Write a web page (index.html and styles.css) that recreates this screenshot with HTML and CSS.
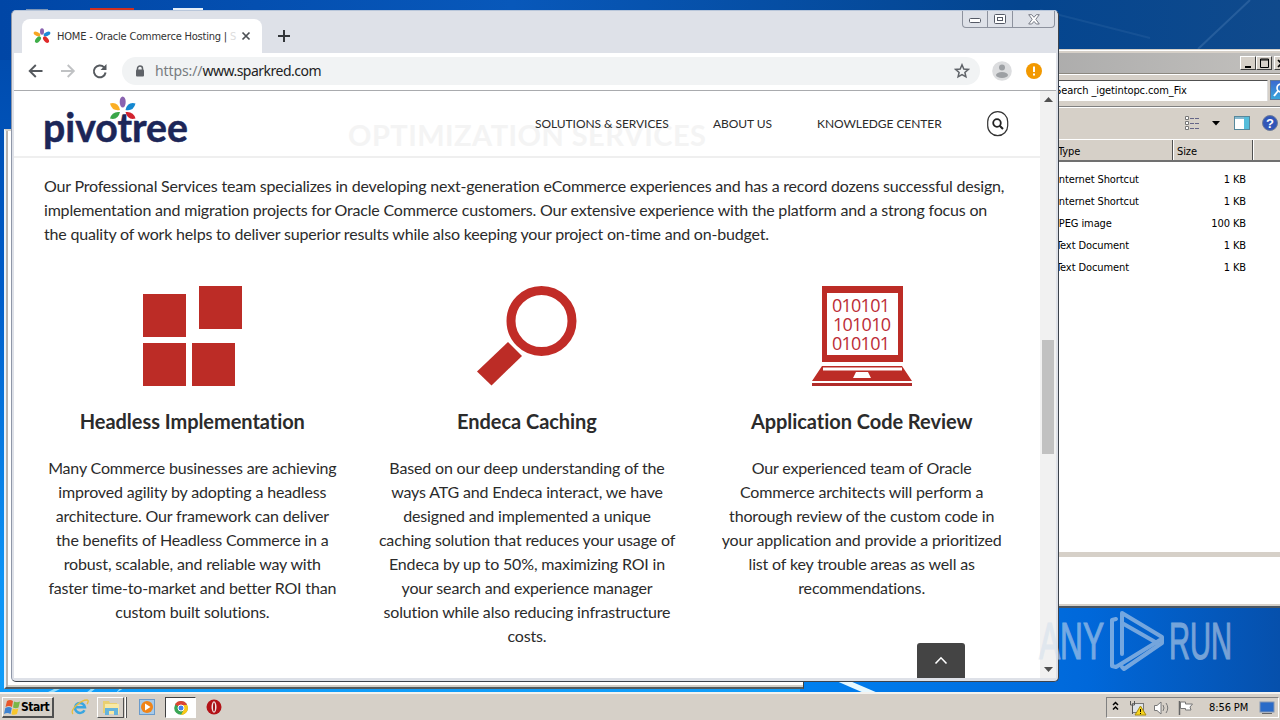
FILE: index.html
```html
<!DOCTYPE html>
<html lang="en">

<head>
    <meta charset="UTF-8">
    <meta name="viewport" content="width=device-width, initial-scale=1.0">
    <title>HOME - Oracle Commerce Hosting</title>
    <link rel="stylesheet" href="styles.css">
</head>

<body>
    <div class="desktop">
        <svg class="wallpaper" width="1280" height="720">
            <defs>
                <linearGradient id="sky" x1="0" y1="0" x2="0" y2="1">
                    <stop offset="0" stop-color="#0048a8" />
                    <stop offset="0.4" stop-color="#005cc8" />
                    <stop offset="0.8" stop-color="#0d93f5" />
                    <stop offset="1" stop-color="#12a0fa" />
                </linearGradient>
                <linearGradient id="rightSky" x1="0" y1="0" x2="1" y2="0">
                    <stop offset="0" stop-color="#0080f0" />
                    <stop offset="0.6" stop-color="#0068da" />
                    <stop offset="1" stop-color="#0650ac" />
                </linearGradient>
                <linearGradient id="topSky" x1="0" y1="0" x2="1" y2="0">
                    <stop offset="0" stop-color="#0046a6" />
                    <stop offset="0.4" stop-color="#0858ba" />
                    <stop offset="0.8" stop-color="#04458f" />
                    <stop offset="1" stop-color="#104a8c" />
                </linearGradient>
            </defs>
            <rect width="1280" height="720" fill="url(#sky)" />
            <rect width="1280" height="60" fill="url(#topSky)" />
            <rect x="800" y="590" width="480" height="130" fill="url(#rightSky)" />
            <path d="M1198 49L1250 0" stroke="#4a7cb5" stroke-opacity=".4" stroke-width="2" />
            <path d="M1040 10L1150 38" stroke="#4a7cb5" stroke-opacity=".2" stroke-width="2" />
            <path d="M834 680L850 681L878 693L864 693Z" fill="#e6f8ff" />
            <path d="M46 693L56 688L62 688L52 693ZM86 693L92 688L96 688L90 693ZM116 693L120 688L124 688Z" fill="#8fdcff" />
            <rect x="26" y="9" width="22" height="2" fill="#7c96b8" />
            <rect x="90" y="8" width="44" height="3" fill="#d03020" />
            <rect x="173" y="8" width="30" height="3" fill="#e4eef8" />
        </svg>

        <div class="back-window"></div>

        <div class="explorer">
            <div class="ex-title">
                <span class="ex-btn"><svg width="15" height="13"><path d="M4 10H10" stroke="#000" stroke-width="2" /></svg></span>
                <span class="ex-btn"><svg width="15" height="13"><path d="M3.5 2H11.5V10.5H3.5ZM3 3H12" fill="none" stroke="#000" /></svg></span>
                <span class="ex-btn ex-close"><svg width="15" height="13"><path d="M3 3L10 10M10 3L3 10" stroke="#000" stroke-width="1.6" /></svg></span>
            </div>
            <div class="ex-search">
                <div class="ex-input">Search _igetintopc.com_Fix</div>
                <div class="ex-go"><svg width="20" height="20"><circle cx="10" cy="7" r="4" fill="none" stroke="#fff" stroke-width="1.6" /><path d="M7 10L3 15" stroke="#fff" stroke-width="2" /></svg></div>
            </div>
            <div class="ex-tools">
                <svg width="96" height="20" viewBox="0 0 96 20">
                    <g fill="#fff" stroke="#777"><path d="M1.500 3.500h3v3h-3zM1.500 8.500h3v3h-3zM1.500 13.500h3v3h-3z" /></g>
                    <path d="M6 5.500H15M6 10.500H15M6 15.500H15" stroke="#668" stroke-dasharray="4 1" />
                    <path d="M28 8H36L32 12.500Z" fill="#000" />
                    <rect x="50.500" y="3.500" width="15" height="13" fill="#fff" stroke="#56889c" />
                    <path d="M51 5H60" stroke="#86b9d0" stroke-width="2" />
                    <rect x="60" y="4" width="5" height="12" fill="#55bddb" />
                    <circle cx="86" cy="10" r="7.500" fill="#3156b8" stroke="#6f7d98" />
                    <text x="86" y="15" class="help-mark">?</text>
                </svg>
            </div>
            <div class="ex-head"><span class="col-type">Type</span><span class="col-size">Size</span><span class="col-rest"></span></div>
            <div class="ex-list">
                <div class="ex-row"><span class="ex-kind">Internet Shortcut</span><span class="ex-kb">1 KB</span></div>
                <div class="ex-row"><span class="ex-kind">Internet Shortcut</span><span class="ex-kb">1 KB</span></div>
                <div class="ex-row"><span class="ex-kind">JPEG image</span><span class="ex-kb">100 KB</span></div>
                <div class="ex-row"><span class="ex-kind">Text Document</span><span class="ex-kb">1 KB</span></div>
                <div class="ex-row"><span class="ex-kind">Text Document</span><span class="ex-kb">1 KB</span></div>
            </div>
            <div class="ex-details"></div>
        </div>

        <div class="browser">
            <div class="tabs">
                <div class="tab">
                    <svg class="favicon" width="18" height="16" viewBox="0 0 18 16">
                        <ellipse cx="9" cy="3.500" rx="2" ry="3.300" fill="#8a63b0" />
                        <ellipse cx="4" cy="6" rx="1.900" ry="3.600" transform="rotate(-65 4 6)" fill="#f6a623" />
                        <ellipse cx="14" cy="6" rx="1.900" ry="3.600" transform="rotate(65 14 6)" fill="#1c8ad6" />
                        <ellipse cx="5" cy="11.700" rx="2.200" ry="3.800" transform="rotate(40 5 11.700)" fill="#3fae49" />
                        <ellipse cx="13" cy="11.700" rx="2.200" ry="3.800" transform="rotate(-40 13 11.700)" fill="#e02a2a" />
                    </svg>
                    <span class="tab-title">HOME - Oracle Commerce Hosting | <i>S</i></span>
                    <svg class="tab-close" width="10" height="10"><path d="M1.500 1.500L8.500 8.500M8.500 1.500L1.500 8.500" stroke="#4c5055" stroke-width="1.700" /></svg>
                </div>
                <svg class="new-tab" width="12" height="12"><path d="M6 0V12M0 6H12" stroke="#33363a" stroke-width="2" /></svg>
                <div class="win-buttons">
                    <span><svg width="13" height="6"><rect x=".5" y=".5" width="11" height="4" rx="1" fill="#fff" stroke="#555a66" /></svg></span>
                    <span><svg width="12" height="10"><rect x=".5" y=".5" width="11" height="9" rx="1" fill="#fff" stroke="#555a66" /><rect x="3.500" y="3.500" width="5" height="3" fill="#fff" stroke="#555a66" /></svg></span>
                    <span class="wide"><svg width="12" height="11"><path d="M.7 .7H3.700L6 3.300L8.300 .7H11.300L7.800 5.300L11.300 10H8.300L6 7.400L3.700 10H.7L4.200 5.300Z" fill="#fff" stroke="#777b86" /></svg></span>
                </div>
            </div>
            <div class="toolbar">
                <svg class="nav-icons" width="84" height="18" viewBox="0 0 84 18">
                    <path d="M15.500 9H3M8.800 3L2.700 9L8.800 15" fill="none" stroke="#55595e" stroke-width="1.900" />
                    <path d="M34 9H46.500M40.700 3L46.800 9L40.700 15" fill="none" stroke="#c0c2c4" stroke-width="1.900" />
                    <path d="M77 5.200A5.900 5.900 0 1 0 78.600 10.500" fill="none" stroke="#55595e" stroke-width="2" />
                    <path d="M79.500 2V8H73.500Z" fill="#55595e" />
                </svg>
                <div class="address">
                    <svg width="10" height="12"><path d="M2.500 5V3.500A2.400 2.400 0 0 1 7.500 3.500V5" fill="none" stroke="#5f6368" stroke-width="1.500" /><rect x="1" y="4.500" width="8" height="7" rx="1" fill="#5f6368" /></svg>
                    <span class="url"><b>https://</b>www.sparkred.com</span>
                    <svg class="star" width="16" height="16" viewBox="0 0 16 16"><path d="M8 1.800L9.800 6L14.300 6.400L10.900 9.400L11.900 13.800L8 11.500L4.100 13.800L5.100 9.400L1.700 6.400L6.200 6Z" fill="none" stroke="#5f6368" stroke-width="1.500" /></svg>
                </div>
                <svg class="profile" width="20" height="20"><circle cx="10" cy="10" r="9.800" fill="#dcdddf" /><circle cx="10" cy="6.500" r="3" fill="#9da0a4" /><ellipse cx="10" cy="14" rx="6" ry="3" fill="#9da0a4" /></svg>
                <svg class="alert" width="16" height="16"><circle cx="8" cy="8" r="8" fill="#f29900" /><path d="M8 3.500V9M8 10.500V12.500" stroke="#fff" stroke-width="2" /></svg>
            </div>
            <div class="view">
                <div class="page">
                    <div class="site-head">
                        <div class="ghost">OPTIMIZATION SERVICES</div>
                        <svg class="logo" width="150" height="64" viewBox="0 0 150 64">
                            <text x="-1" y="51" textLength="145" lengthAdjust="spacingAndGlyphs" class="logo-text">pivotree</text>
                            <ellipse cx="78.700" cy="11" rx="3" ry="5.500" fill="#8a63b0" />
                            <path d="M66 12.500Q74 10.500 76 19Q68 20.500 66 12.500Z" fill="#fbae24" />
                            <path d="M91.500 12.500Q83.500 10.500 81.500 19Q89.500 20.500 91.500 12.500Z" fill="#1488d0" />
                            <path d="M76 21Q68 20 66 27.500Q74 29.500 76 21Z" fill="#3aa648" />
                            <path d="M81.500 21Q89.500 20 91.500 27.500Q83.500 29.500 81.500 21Z" fill="#d2232e" />
                        </svg>
                        <div class="menu">
                            <span class="m-solutions">SOLUTIONS &amp; SERVICES</span>
                            <span class="m-about">ABOUT US</span>
                            <span class="m-center">KNOWLEDGE CENTER</span>
                            <svg width="22" height="26" viewBox="0 0 22 26"><rect x=".7" y=".7" width="20" height="24" rx="10" fill="#fff" stroke="#333" stroke-width="1.200" /><circle cx="10" cy="12" r="3.800" fill="none" stroke="#222" stroke-width="1.800" /><path d="M12.700 14.700L16 18" stroke="#222" stroke-width="2" /></svg>
                        </div>
                    </div>
                    <div class="intro">
                        <div>Our Professional Services team specializes in developing next-generation eCommerce experiences and has a record dozens successful design,</div>
                        <div>implementation and migration projects for Oracle Commerce customers. Our extensive experience with the platform and a strong focus on</div>
                        <div>the quality of work helps to deliver superior results while also keeping your project on-time and on-budget.</div>
                    </div>
                    <div class="services">
                        <div class="service">
                            <svg width="100" height="100"><path d="M1 8H44V51H1ZM57 0H100V43H57ZM1 57H44V100H1ZM50 57H93V100H50Z" fill="#bc2c26" /></svg>
                            <h3>Headless Implementation</h3>
                            <p>Many Commerce businesses are achieving<br>improved agility by adopting a headless<br>architecture. Our framework can deliver<br>the benefits of Headless Commerce in a<br>robust, scalable, and reliable way with<br>faster time-to-market and better ROI than<br>custom built solutions.</p>
                        </div>
                        <div class="service">
                            <svg width="100" height="100"><circle cx="64.500" cy="35" r="30.500" fill="none" stroke="#c12c27" stroke-width="9" /><path d="M31 56L45 70L14.500 99.500L0 85.500Z" fill="#bc2c26" /></svg>
                            <h3>Endeca Caching</h3>
                            <p>Based on our deep understanding of the<br>ways ATG and Endeca interact, we have<br>designed and implemented a unique<br>caching solution that reduces your usage of<br>Endeca by up to 50%, maximizing ROI in<br>your search and experience manager<br>solution while also reducing infrastructure<br>costs.</p>
                        </div>
                        <div class="service">
                            <svg width="100" height="100">
                                <path d="M10 0H91V76H10ZM15 7V69H86V7Z" fill="#bc2c26" fill-rule="evenodd" />
                                <path d="M10 80H90L100 95H0ZM11 81.500L11 84.500H90V81.500ZM44 86L41 92H59L56 86Z" fill="#bc2c26" fill-rule="evenodd" />
                                <rect y="97" width="100" height="3" fill="#b02c2a" />
                                <g class="bits">
                                    <text x="20" y="26" textLength="58">010101</text>
                                    <text x="21" y="45" textLength="58">101010</text>
                                    <text x="20" y="64" textLength="58">010101</text>
                                </g>
                            </svg>
                            <h3>Application Code Review</h3>
                            <p>Our experienced team of Oracle<br>Commerce architects will perform a<br>thorough review of the custom code in<br>your application and provide a prioritized<br>list of key trouble areas as well as<br>recommendations.</p>
                        </div>
                    </div>
                    <div class="to-top"><svg width="14" height="9"><path d="M1.500 7.500L7 1.800L12.500 7.500" fill="none" stroke="#fff" stroke-width="1.600" /></svg></div>
                </div>
                <div class="scrollbar">
                    <svg width="9" height="5"><path d="M0 5L4.500 0L9 5Z" fill="#505050" /></svg>
                    <div class="thumb"></div>
                    <svg width="9" height="5"><path d="M0 0L4.500 5L9 0Z" fill="#505050" /></svg>
                </div>
            </div>
        </div>

        <svg class="watermark" width="220" height="80" viewBox="0 0 220 80">
            <text x="4" y="53" textLength="65" lengthAdjust="spacingAndGlyphs">ANY</text>
            <text x="134" y="53" textLength="63" lengthAdjust="spacingAndGlyphs">RUN</text>
            <g fill="none" stroke-width="4" stroke-linejoin="round" stroke-linecap="round">
                <path d="M81 13L77 14V60L81 61L125 34" />
                <path d="M87 48V7L127 31L127 37L89 63L87 61" />
                <path d="M87 17L122 37" />
            </g>
        </svg>

        <div class="taskbar">
            <div class="start">
                <svg width="17" height="16" viewBox="0 0 17 16"><path d="M3 2Q6 0 9 2L8 8Q5 6 1.500 8Z" fill="#e8562a" /><path d="M10 2.500Q13 4 16 2.500L14.500 8.500Q12 10 9 8.500Z" fill="#7ab648" /><path d="M1.300 9Q5 7 7.800 9L6.500 15Q3.500 13 0 15Z" fill="#3e82d0" /><path d="M8.800 9.500Q11.500 11 14.300 9.500L13 15Q10 16.500 7.500 15.300Z" fill="#f8c62c" /></svg>
                <span>Start</span>
            </div>
            <svg class="ie" width="18" height="18" viewBox="0 0 18 18"><path d="M13.500 12.200A5 5 0 1 1 14 9.300H5" fill="none" stroke="#3aa6e0" stroke-width="2.500" /><path d="M2 16C-2 12 10 2 16 2C18 2 17 5 16 6" fill="none" stroke="#e8bd3c" stroke-width="1.300" /></svg>
            <div class="task folder"><svg width="18" height="17" viewBox="0 0 18 17"><path d="M1 2H7L8 4H15V14H1Z" fill="#e9cf71" /><path d="M3 5H17V15H3Z" fill="#f8e9a4" /><path d="M3 16V9H16V16H12V12H7V16Z" fill="#65b4dc" /></svg></div>
            <svg class="wmp" width="16" height="16"><rect x=".5" y=".5" width="15" height="15" fill="#a7cae9" stroke="#6a9bcb" /><circle cx="8" cy="8" r="6" fill="#f08418" /><path d="M6 4.500L11.500 8L6 11.500Z" fill="#fff" /></svg>
            <div class="task active"><svg width="14" height="14" viewBox="0 0 14 14"><circle cx="7" cy="7" r="6.800" fill="#3aa655" /><path d="M7 7L1 3.600A6.900 6.900 0 0 1 13 3.600Z" fill="#dd4433" /><path d="M7 4H13.200A6.900 6.900 0 0 1 7 13.900L10 8Z" fill="#fbc718" /><circle cx="7" cy="7" r="3" fill="#4582ec" stroke="#fff" /></svg></div>
            <svg class="opera" width="16" height="16"><circle cx="8" cy="8" r="7.500" fill="#b31217" /><ellipse cx="8" cy="8" rx="2.500" ry="5.800" fill="#f2e6e6" /><ellipse cx="8" cy="8" rx="1" ry="4.500" fill="#a01014" /></svg>
            <div class="tray">
                <svg width="82" height="18" viewBox="0 0 82 18">
                    <path d="M1 6L3.500 3.500L6 6M1 10.500L3.500 8L6 10.500" fill="none" stroke="#000" stroke-width="1.500" />
                    <rect x="20.500" y="4.500" width="11" height="9" fill="#dfe4e8" stroke="#777" /><path d="M18.500 2V6H22.500V2M20.500 6V15" fill="none" stroke="#555" /><path d="M28.500 7L34 16H23Z" fill="#f6d31c" stroke="#a88a10" /><path d="M28.500 10V13M28.500 14V15" stroke="#000" />
                    <path d="M42.500 6.500H45L49 3V15L45 11.500H42.500Z" fill="#fff" stroke="#777" /><path d="M51 6Q53 9 51 12M54 4Q57.500 9 54 14" fill="none" stroke="#777" />
                    <path d="M67.500 2V16" stroke="#666" stroke-width="1.500" /><path d="M68.500 3H73.500V5H80.500L78 8L79 11H73.500V9.500H68.500Z" fill="#fff" stroke="#777" />
                </svg>
                <span class="clock">8:56 PM</span>
                <svg class="show-desk" width="16" height="14"><rect x="1" y="1" width="14" height="10" fill="#2a6bc8" stroke="#8296b4" /><path d="M3 12.500H13" stroke="#666" /></svg>
            </div>
        </div>
    </div>
</body>

</html>
```

FILE: styles.css
```css
* {
    box-sizing: border-box;
}

body {
    margin: 0;
    font-family: Lato, sans-serif;
    font-variant-ligatures: none;
    color: #2b2b2b;
}

svg {
    display: block;
    flex: none;
}

.desktop {
    position: relative;
    width: 1280px;
    height: 720px;
    overflow: hidden;
}

.wallpaper {
    position: absolute;
}

/* windows */

.back-window {
    position: absolute;
    left: 4px;
    top: 129px;
    width: 800px;
    height: 560px;
    background: #fff;
    border: 2px solid #d4d0c8;
    border-left-color: #eaf4fc;
    border-right: 1px solid #404040;
    border-bottom: 2px solid #555a5c;
    box-shadow: inset 2px 0 #b8b4b0, inset 0 -2px #d4d0c8;
}

.explorer {
    position: absolute;
    left: 1000px;
    top: 49px;
    width: 290px;
    height: 559px;
    display: flex;
    flex-direction: column;
    background: #d6d0c8;
    border-top: 1px solid #d4d0c8;
    border-bottom: 2px solid #4a5560;
    font: 11px "DejaVu Sans Condensed", sans-serif;
    letter-spacing: -0.1px;
    color: #000;
}

.ex-title {
    display: flex;
    height: 23px;
    margin-top: 1px;
    padding: 3px 0 0 240px;
    border-top: 2px solid #d6d0c8;
    border-bottom: 1px solid #8c8880;
    background: linear-gradient(90deg, #a8a8a8, #c3c1be);
    box-shadow: 0 -1px #fff, 0 1px #fff;
}

.ex-btn {
    width: 16px;
    height: 14px;
    flex: none;
    background: #d6d0c8;
    border: 1px solid #fff;
    border-right-color: #404040;
    border-bottom-color: #404040;
}

.ex-close {
    margin-left: 2px;
}

.ex-search {
    display: flex;
    height: 33px;
    padding-top: 6px;
    border-bottom: 1px solid #808080;
    box-shadow: 0 1px #fff;
}

.ex-input {
    width: 269px;
    height: 21px;
    padding-left: 55px;
    line-height: 20px;
    background: #fff;
    border-top: 1px solid #505050;
    border-right: 1px solid #ddd;
}

.ex-go {
    width: 20px;
    height: 20px;
    margin-left: 2px;
    background: linear-gradient(#3b6bd0, #38a6dc);
    border: 1px solid #607898;
}

.ex-tools {
    height: 32px;
    padding: 6px 0 0 184px;
}

.help-mark {
    font: bold 13px "Liberation Sans", sans-serif;
    fill: #fff;
    text-anchor: middle;
}

.ex-head {
    display: flex;
    height: 23px;
    line-height: 23px;
    border-top: 1px solid #fff;
    border-bottom: 2px solid #707070;
}

.ex-head span {
    height: 20px;
    border-right: 1px solid #505050;
    box-shadow: 1px 0 #fff;
}

.col-type {
    width: 173px;
    padding-left: 58px;
}

.col-size {
    width: 80px;
    padding-left: 4px;
}

.col-rest {
    width: 37px;
}

.ex-list {
    height: 390px;
    padding-top: 7px;
    background: #fff;
}

.ex-row {
    display: flex;
    width: 246px;
    height: 22px;
    padding-left: 56px;
    line-height: 22px;
    justify-content: space-between;
}

.ex-details {
    flex: 1;
    margin: 5px 0 2px;
    background: #fff;
}

.browser {
    position: absolute;
    left: 11px;
    top: 10px;
    width: 1048px;
    height: 672px;
    display: flex;
    flex-direction: column;
    padding: 0 2px 3px;
    background: #dee1e8;
    border: 1px solid #3d434c;
    border-top-color: #b8c6da;
    border-left-color: #8f97a8;
    border-radius: 5px;
}

.tabs {
    display: flex;
    height: 42px;
}

.tab {
    display: flex;
    align-items: center;
    width: 240px;
    height: 34px;
    margin: 8px 0 0 8px;
    padding-left: 11px;
    background: #fff;
    border-radius: 8px 8px 0 0;
}

.tab-title {
    width: 180px;
    margin: 0 4px 0 6px;
    white-space: nowrap;
    font: 11px "DejaVu Sans Condensed", sans-serif;
    letter-spacing: -0.2px;
    color: #333;
}

.tab-title i {
    font-style: normal;
    color: #ddd;
}

.new-tab {
    margin: 19px 0 0 16px;
}

.win-buttons {
    display: flex;
    height: 17px;
    margin-left: auto;
    margin-right: 1px;
    border: 1px solid #8d929e;
    border-top: none;
    border-radius: 0 0 4px 4px;
}

.win-buttons span {
    display: flex;
    align-items: center;
    justify-content: center;
    width: 25px;
    border-right: 1px solid #8d929e;
}

.win-buttons span:first-child {
    padding-top: 4px;
}

.win-buttons .wide {
    width: 41px;
    border: none;
}

.toolbar {
    display: flex;
    align-items: center;
    height: 38px;
    padding: 0 0 2px 13px;
    background: #fff;
    border-bottom: 1px solid #a9abae;
}

.address {
    display: flex;
    align-items: center;
    width: 858px;
    height: 28px;
    margin-left: 11px;
    padding: 0 10px 0 13px;
    background: #f1f3f4;
    border-radius: 14px;
}

.url {
    margin-left: 10px;
    font: 14px "Noto Sans", sans-serif;
    color: #222;
    letter-spacing: -0.5px;
}

.url b {
    font-weight: normal;
    letter-spacing: -0.1px;
    color: #777b80;
}

.star {
    margin-left: auto;
}

.profile {
    margin-left: 12px;
}

.alert {
    margin-left: 14px;
}

.view {
    display: flex;
    flex: 1;
    overflow: hidden;
}

.page {
    position: relative;
    width: 1026px;
    background: #fff;
}

/* site */

.site-head {
    position: relative;
    display: flex;
    height: 67px;
    padding-left: 30px;
    border-bottom: 2px solid #efefef;
}

.ghost {
    position: absolute;
    left: 334px;
    top: 26px;
    font-size: 29px;
    line-height: 36px;
    font-weight: bold;
    letter-spacing: 0.45px;
    color: #f4f4f4;
    white-space: nowrap;
}

.logo-text {
    font: bold 40px Lato, sans-serif;
    fill: #1c2658;
    stroke: #1c2658;
    stroke-width: 0.5px;
}

.menu {
    position: relative;
    display: flex;
    align-items: center;
    height: 65px;
    margin-left: 341px;
    font-size: 12px;
    letter-spacing: -0.06px;
    white-space: nowrap;
}

.m-solutions {
    width: 178px;
}

.m-about {
    width: 104px;
}

.m-center {
    width: 170px;
}

.intro {
    padding: 16px 0 0 30px;
    font-size: 16px;
    line-height: 24px;
    letter-spacing: -0.19px;
    white-space: nowrap;
}

.services {
    display: flex;
    margin: 40px 0 0 11px;
}

.service {
    display: flex;
    flex-direction: column;
    align-items: center;
    width: 334.67px;
    text-align: center;
    white-space: nowrap;
}

.service h3 {
    margin: 21px 0;
    font-size: 20px;
    line-height: 28px;
    letter-spacing: -0.05px;
}

.service p {
    margin: 0;
    font-size: 16px;
    line-height: 24px;
    letter-spacing: -0.16px;
}

.bits {
    font: 18px "Open Sans", sans-serif;
    fill: #bc2c36;
}

.to-top {
    position: absolute;
    left: 903px;
    bottom: 0;
    display: flex;
    align-items: center;
    justify-content: center;
    width: 48px;
    height: 35px;
    background: #444;
    border-radius: 3px 3px 0 0;
}

.scrollbar {
    display: flex;
    flex-direction: column;
    align-items: center;
    width: 16px;
    padding: 6px 0;
    background: #f1f1f1;
}

.thumb {
    width: 12px;
    height: 114px;
    margin: 238px 0 auto;
    background: #c1c1c1;
}

.watermark {
    position: absolute;
    left: 1035px;
    top: 606px;
    opacity: 0.55;
}

.watermark text {
    font: 51px "Liberation Sans", sans-serif;
    fill: #d3dfec;
    stroke: #d3dfec;
    stroke-width: 1.2px;
}

.watermark g {
    stroke: #d3dfec;
}

/* taskbar */

.taskbar {
    position: absolute;
    left: 0;
    top: 692px;
    width: 1280px;
    height: 28px;
    display: flex;
    padding-top: 3px;
    background: #d6d0c8;
    border-top: 2px solid #f4f2ee;
    font: 11px "DejaVu Sans Condensed", sans-serif;
    color: #000;
}

.start {
    display: flex;
    align-items: center;
    width: 52px;
    height: 21px;
    margin-left: 2px;
    padding-left: 1px;
    border: 1px solid #fff;
    border-right: 2px solid #505050;
    border-bottom: 2px solid #505050;
    font-weight: bold;
}

.start span {
    margin-left: 0;
    font-size: 12px;
    letter-spacing: -0.5px;
}

.ie {
    margin: 1px 0 0 17px;
}

.task {
    display: flex;
    align-items: center;
    justify-content: center;
    width: 31px;
    height: 21px;
    border: 1px solid #fff;
}

.folder {
    width: 27px;
    margin: 0 2px 0 8px;
    border-right: 1px solid #505050;
    border-bottom-color: #505050;
    box-shadow: 1px 0 #d6d0c8, 2px 0 #fff, 3px 0 #505050;
}

.wmp {
    margin: 2px 0 0 13px;
}

.active {
    margin-left: 10px;
    background: #fff;
    border-top-color: #404040;
    border-left-color: #404040;
}

.opera {
    margin: 2px 0 0 10px;
}

.tray {
    display: flex;
    align-items: center;
    width: 173px;
    height: 21px;
    margin: 0 1px 0 auto;
    padding-left: 5px;
    border: 1px solid #808080;
    border-right-color: #fff;
    border-bottom-color: #fff;
}

.clock {
    margin-left: 15px;
    letter-spacing: -0.1px;
}

.show-desk {
    margin-left: 11px;
}
```
